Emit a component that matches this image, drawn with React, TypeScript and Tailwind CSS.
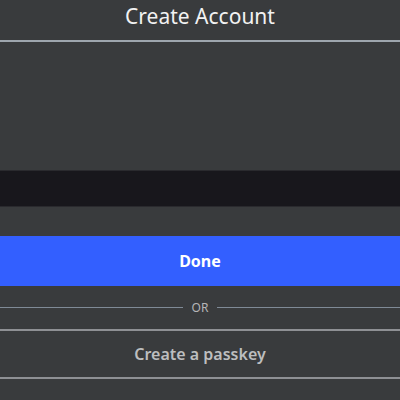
export default function App() {
  return (
    <div
      className="w-[400px] h-[400px] overflow-hidden bg-[#393b3d] flex flex-col"
      style={{ fontFamily: '"Noto Sans", "Open Sans", sans-serif' }}
    >
      <div className="h-[40px] flex items-center justify-center">
        <h1 className="text-[21px] text-[#f2f2f2] leading-none -mt-[7px]">Create Account</h1>
      </div>
      <div className="h-[2px] bg-[#9ea6ae]" />
      <div className="h-[128px]" />
      <div className="h-[37px] bg-[#18171c] border-y border-[#2a2a2e]" />
      <div className="h-[29px]" />
      <button
        type="button"
        className="h-[50px] bg-[#335fff] text-white text-[16px] font-bold flex items-center justify-center"
      >
        Done
      </button>
      <div className="h-[43px] flex items-center gap-[9px]">
        <div className="flex-1 h-px bg-[#7f8a96]" />
        <span className="text-[12px] text-[#b5b5b7]">OR</span>
        <div className="flex-1 h-px bg-[#7f8a96]" />
      </div>
      <div className="h-[2px] bg-[#8e9094]" />
      <button
        type="button"
        className="h-[46px] text-[16px] font-semibold text-[#bdbebf] flex items-center justify-center"
      >
        Create a passkey
      </button>
      <div className="h-[2px] bg-[#8e9094]" />
    </div>
  );
}
